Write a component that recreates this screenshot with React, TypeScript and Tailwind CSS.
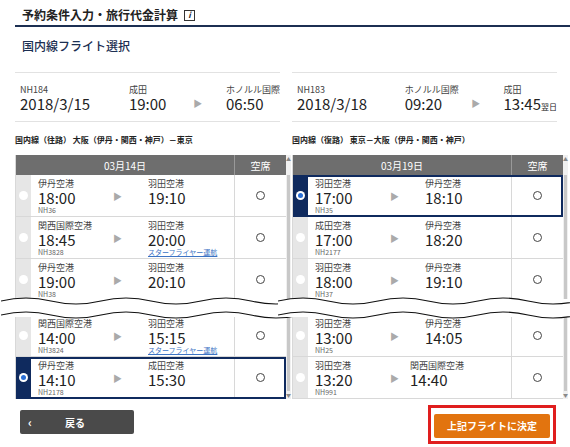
import React from "react";

type Flight = { from: string; dep: string; to: string; arr: string; no: string; star?: boolean; sel?: boolean; arrShift?: boolean };

const font = { fontFamily: '"Noto Sans CJK JP", "Noto Sans", sans-serif' };

function Row({ f }: { f: Flight }) {
  return (
    <div className={`flex h-[42px] border-b border-[#d8d8d8] ${f.sel ? "outline-2 outline-[#0f2a5e] -outline-offset-2 relative z-10" : ""}`}>
      <div className={`w-[15px] flex items-center justify-center ${f.sel ? "bg-[#0f2a5e]" : "bg-[#e6e6e6]"}`}>
        {f.sel ? (
          <div className="w-[9px] h-[9px] rounded-full bg-white flex items-center justify-center">
            <div className="w-[5px] h-[5px] rounded-full bg-[#2a6fd6]" />
          </div>
        ) : (
          <div className="w-[9px] h-[9px] rounded-full bg-white" />
        )}
      </div>
      <div className="flex-1 flex pl-[7px] pt-[3px] bg-white whitespace-nowrap">
        <div className="w-[75px]">
          <div className="text-[9px] leading-[11px] text-[#444]">{f.from}</div>
          <div className="text-[15px] leading-[17px] text-[#222]">{f.dep}</div>
          <div className="text-[7px] leading-[9px] text-[#666]">{f.no}</div>
        </div>
        <div className={`${f.arrShift ? "w-[20px]" : "w-[35px]"} flex pt-[13px]`}>
          <span className="text-[9px] leading-[11px] text-[#aaa]">▶</span>
        </div>
        <div>
          <div className="text-[9px] leading-[11px] text-[#444]">{f.to}</div>
          <div className="text-[15px] leading-[17px] text-[#222]">{f.arr}</div>
          {f.star && <div className="text-[7px] leading-[9px] text-[#3b73c4] underline">スターフライヤー運航</div>}
        </div>
      </div>
      <div className="w-[52px] border-l border-[#d8d8d8] bg-white flex items-center justify-center">
        <div className="w-[9px] h-[9px] rounded-full border border-[#444]" />
      </div>
    </div>
  );
}

function Wave() {
  return (
    <svg className="block -mx-[15px] relative z-20" width="300" height="22" viewBox="0 0 300 22" preserveAspectRatio="none">
      <rect x="0" y="2" width="300" height="18" fill="white" />
      <path d="M0 4 Q25 -2 50 4 T100 4 T150 4 T200 4 T250 4 T300 4" fill="none" stroke="#111" strokeWidth="1.2" />
      <path d="M0 18 Q25 12 50 18 T100 18 T150 18 T200 18 T250 18 T300 18" fill="none" stroke="#111" strokeWidth="1.2" />
    </svg>
  );
}

function Column({ no, date, d1, t1, d2, t2, next, route, day, top, bottom, w1 }: {
  no: string; date: string; d1: string; t1: string; d2: string; t2: string; next?: boolean; route: string; day: string; top: Flight[]; bottom: Flight[]; w1: string;
}) {
  return (
    <div className="w-[265px]">
      <div className="border-t border-b border-[#e2e2e2] h-[50px] pt-[11px] flex pl-[5px] whitespace-nowrap">
        <div className="w-[110px]">
          <div className="text-[9px] leading-[11px] text-[#444]">{no}</div>
          <div className="text-[15px] leading-[18px] text-[#222]">{date}</div>
        </div>
        <div className={w1}>
          <div className="text-[9px] leading-[11px] text-[#444]">{d1}</div>
          <div className="text-[15px] leading-[18px] text-[#222]">{t1}</div>
        </div>
        <div className="w-[33px] pt-[14px] text-[9px] leading-[11px] text-[#aaa]">▶</div>
        <div>
          <div className="text-[9px] leading-[11px] text-[#444]">{d2}</div>
          <div className="text-[15px] leading-[18px] text-[#222]">{t2}{next && <span className="text-[8px]">翌日</span>}</div>
        </div>
      </div>
      <div className="text-[8px] font-bold text-[#222] mt-[12px] h-[21px] whitespace-nowrap">{route}</div>
      <div className="flex">
        <div className="flex-1 border-l border-[#d8d8d8]">
          <div className="flex h-[20px] bg-[#6e6e6e] text-white text-[10px]">
            <div className="flex-1 flex items-center justify-center">{day}</div>
            <div className="w-[52px] border-l border-[#999] flex items-center justify-center">空席</div>
          </div>
          {top.map((f) => <Row key={f.no} f={f} />)}
          <div className="-my-[4px]"><Wave /></div>
          {bottom.map((f) => <Row key={f.no} f={f} />)}
        </div>
        <div className="w-[8px] bg-[#f0f0f0] flex flex-col">
          <div className="h-[20px] text-[5px] text-[#888] text-center">▲</div>
          <div className="flex-1 bg-[#c8c8c8] mx-[1px]" />
          <div className="h-[8px] text-[5px] text-[#888] text-center">▼</div>
        </div>
      </div>
    </div>
  );
}

export default function App() {
  return (
    <div className="w-[570px] h-[447px] bg-white overflow-hidden" style={font}>
      <div className="pl-[22px] pt-[5px] h-[25px] text-[12px] font-bold text-[#222] flex items-center gap-[6px]">
        予約条件入力・旅行代金計算
        <span className="inline-flex w-[11px] h-[11px] border border-[#333] text-[8px] italic items-center justify-center">i</span>
      </div>
      <div className="ml-[15px] h-[2px] bg-[#1c2f52]" />
      <div className="pl-[22px] pt-[10px] text-[12px] text-[#1c2f52] font-medium h-[45px]">国内線フライト選択</div>
      <div className="flex pl-[15px] gap-[12px]">
        <Column w1="w-[65px]" no="NH184" date="2018/3/15" d1="成田" t1="19:00" d2="ホノルル国際" t2="06:50" route="国内線（往路） 大阪（伊丹・関西・神戸）－東京" day="03月14日"
          top={[
            { from: "伊丹空港", dep: "18:00", to: "羽田空港", arr: "19:10", no: "NH36" },
            { from: "関西国際空港", dep: "18:45", to: "羽田空港", arr: "20:00", no: "NH3828", star: true },
            { from: "伊丹空港", dep: "19:00", to: "羽田空港", arr: "20:10", no: "NH38" },
          ]}
          bottom={[
            { from: "関西国際空港", dep: "14:00", to: "羽田空港", arr: "15:15", no: "NH3824", star: true },
            { from: "伊丹空港", dep: "14:10", to: "成田空港", arr: "15:30", no: "NH2178", sel: true },
          ]} />
        <Column w1="w-[68px]" no="NH183" date="2018/3/18" d1="ホノルル国際" t1="09:20" d2="成田" t2="13:45" next route="国内線（復路） 東京－大阪（伊丹・関西・神戸）" day="03月19日"
          top={[
            { from: "羽田空港", dep: "17:00", to: "伊丹空港", arr: "18:10", no: "NH35", sel: true },
            { from: "成田空港", dep: "17:00", to: "伊丹空港", arr: "18:20", no: "NH2177" },
            { from: "羽田空港", dep: "18:00", to: "伊丹空港", arr: "19:10", no: "NH37" },
          ]}
          bottom={[
            { from: "羽田空港", dep: "13:00", to: "伊丹空港", arr: "14:05", no: "NH25" },
            { from: "羽田空港", dep: "13:20", to: "関西国際空港", arr: "14:40", no: "NH991", arrShift: true },
          ]} />
      </div>
      <div className="flex justify-between pl-[20px] pr-[14px] mt-[10px]">
        <button className="w-[114px] h-[24px] mt-[1px] bg-[#4a4a4a] rounded-[2px] text-white text-[10px] font-bold flex items-center">
          <span className="pl-[8px] w-[45px] text-left text-[12px]">‹</span>戻る
        </button>
        <div className="border-[3px] border-[#e01e1e] p-[3px] -mt-[4px]">
          <button className="w-[116px] h-[24px] bg-[#e2740f] rounded-[2px] text-white text-[10px] font-bold">上記フライトに決定</button>
        </div>
      </div>
    </div>
  );
}
